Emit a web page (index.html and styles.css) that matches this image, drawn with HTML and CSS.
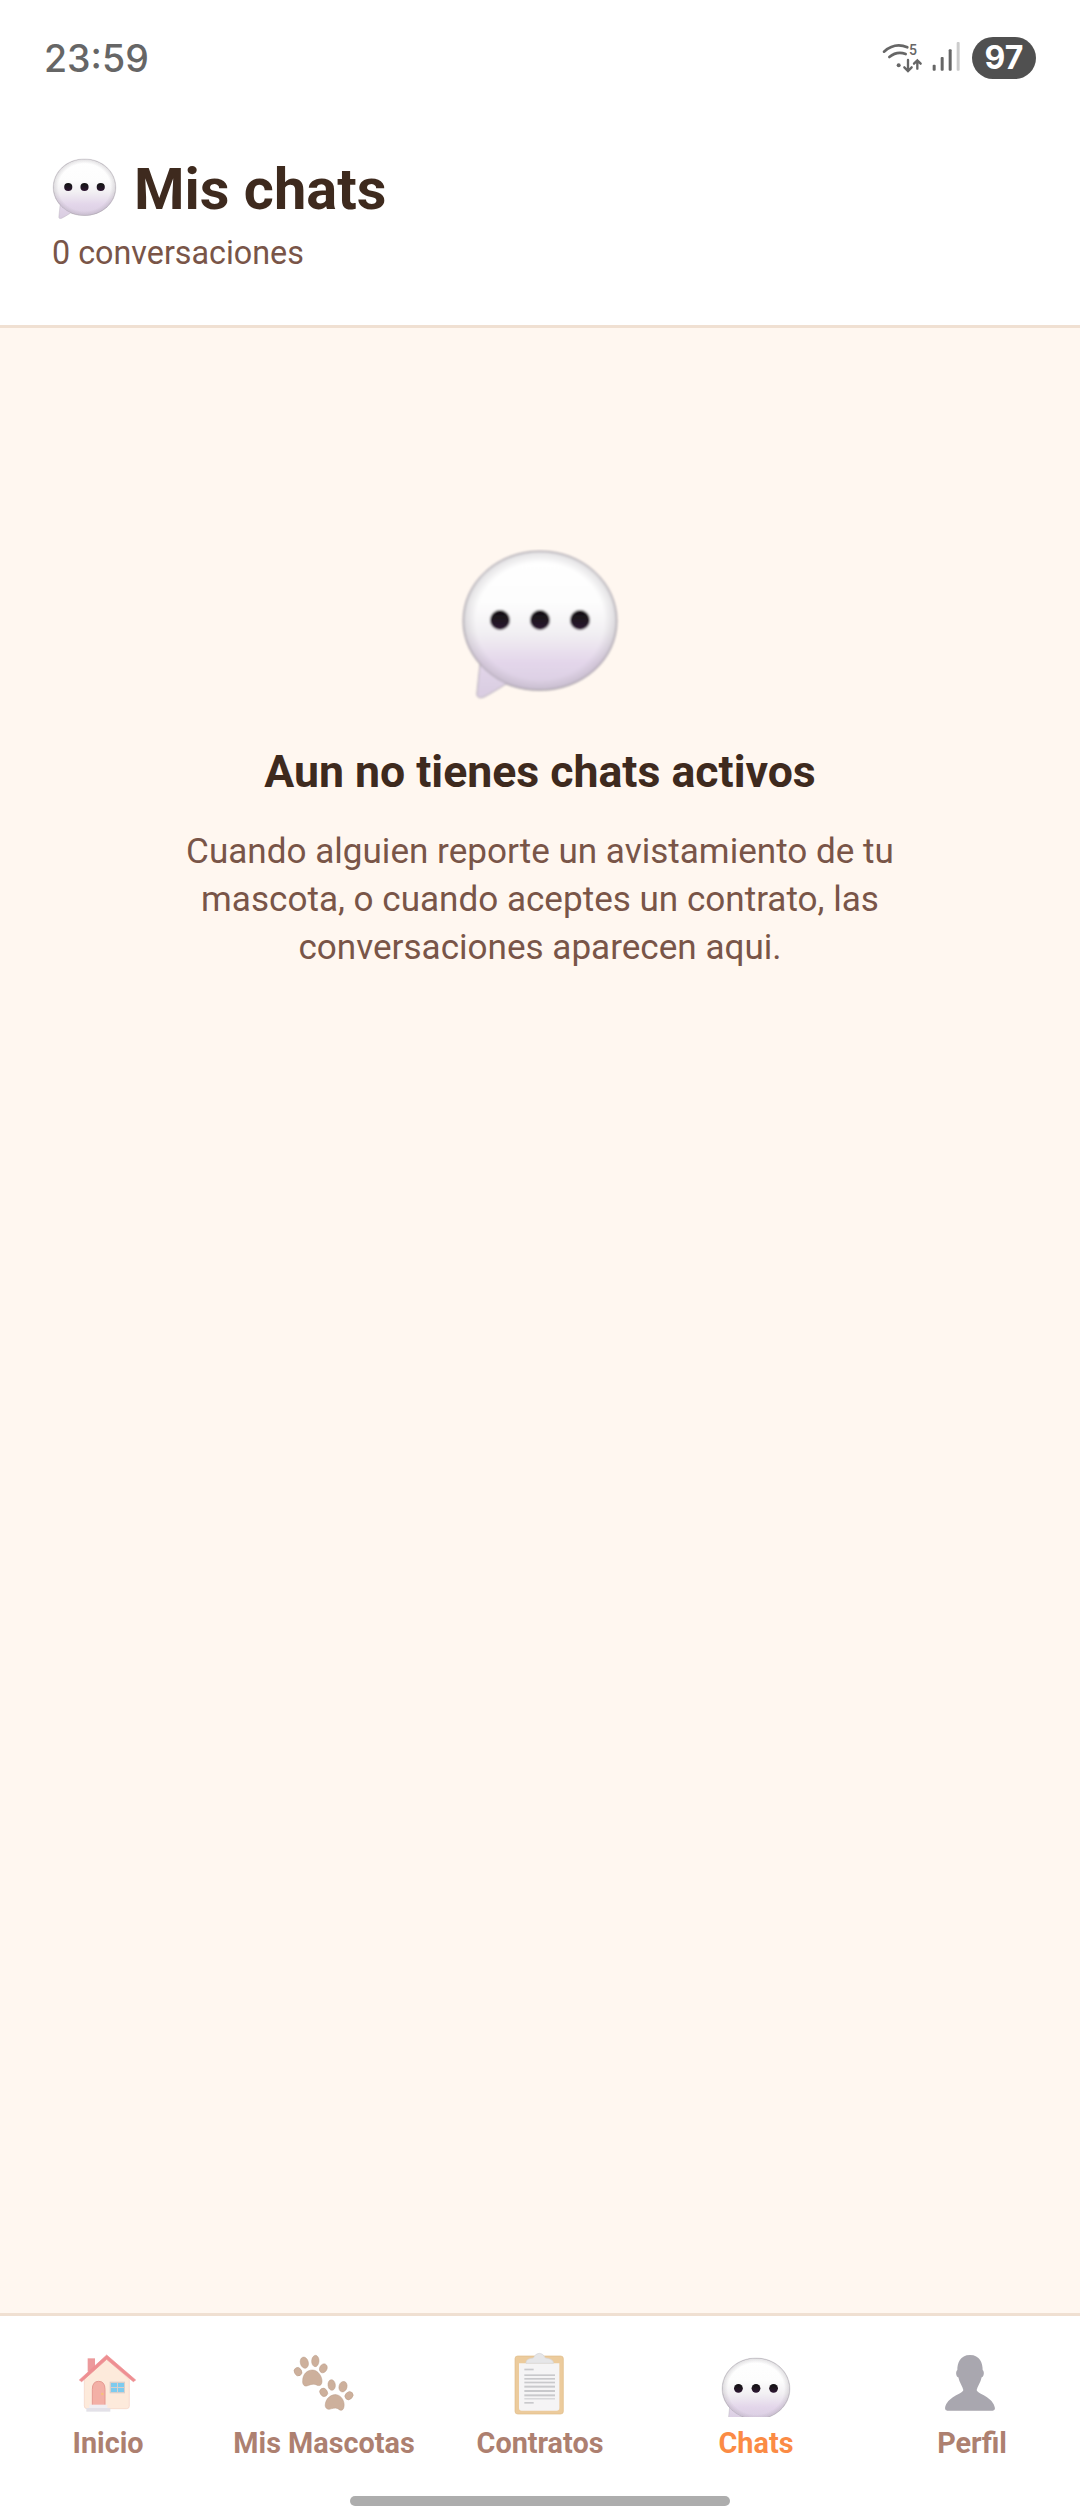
FILE: index.html
```html
<!DOCTYPE html>
<html lang="es">
<head>
<meta charset="utf-8">
<title>Mis chats</title>
<link rel="stylesheet" href="styles.css">
</head>
<body>
<div class="screen">
  <header class="top">
    <div class="status">
      <span class="time">23:59</span>
      <div class="status-right">
        <svg class="status-icons" viewBox="129 60 246 120">
          <g fill="none" stroke="#666" stroke-width="8" stroke-linecap="round">
            <path d="M135 101 Q168 72 205 88"/>
            <path d="M151 117 Q174 98 200 108"/>
            <path d="M207 126V158M196 148L207 159L218 148" stroke-width="7"/>
            <path d="M235 152V127M225 137L235 127L245 137" stroke-width="7"/>
          </g>
          <circle cx="179" cy="142" r="6" fill="#666"/>
          <text class="wifi-five" x="210" y="110">5</text>
          <g fill="#666">
            <rect x="281" y="140" width="9" height="18" rx="3"/>
            <rect x="305" y="117" width="9" height="41" rx="3"/>
            <rect x="329" y="94" width="9" height="64" rx="3"/>
            <rect x="353" y="72" width="9" height="86" rx="3" fill="#ccc"/>
          </g>
        </svg>
        <span class="battery">97</span>
      </div>
    </div>
    <div class="title-block">
      <h1 class="title">
        <svg class="title-emoji" viewBox="0 0 160 152">
          <defs>
            <linearGradient id="bubbleFill" x1="0" y1="0" x2="0" y2="1">
              <stop offset="0" stop-color="#fff"/>
              <stop offset="0.35" stop-color="#fdfdfd"/>
              <stop offset="0.55" stop-color="#f2f0f3"/>
              <stop offset="0.76" stop-color="#e3d6ea"/>
              <stop offset="1" stop-color="#d8cce0"/>
            </linearGradient>
            <radialGradient id="bubbleEdge" cx="80" cy="72" r="80" gradientUnits="userSpaceOnUse" gradientTransform="translate(0 6.5) scale(1 0.91)">
              <stop offset="0.8" stop-color="#8d8790" stop-opacity="0"/>
              <stop offset="0.93" stop-color="#8d8790" stop-opacity="0.22"/>
              <stop offset="0.97" stop-color="#8d8790" stop-opacity="0.6"/>
            </radialGradient>
            <linearGradient id="dotFill" x1="0" y1="0" x2="0" y2="1">
              <stop offset="0" stop-color="#111"/>
              <stop offset="1" stop-color="#2e1433"/>
            </linearGradient>
            <filter id="soft" x="-5%" y="-5%" width="110%" height="110%"><feGaussianBlur stdDeviation="1"/></filter>
            <clipPath id="tailCut"><rect x="-5" y="-5" width="170" height="141"/></clipPath>
            <symbol id="bubble" viewBox="0 0 160 152">
              <g filter="url(#soft)">
                <path d="M80 2C123 2 157 33 157 72C157 111 123 141 80 141C67 141 56 139 46 135C38 140 30 145 24 148C19 150 16 148 17 143C18 134 19 124 20 115C9 103 3 88 3 72C3 33 37 2 80 2Z" fill="url(#bubbleFill)" stroke="#b4aeb7" stroke-width="1"/>
                <ellipse cx="80" cy="72" rx="77" ry="70" fill="url(#bubbleEdge)"/>
                <circle cx="40" cy="71" r="10" fill="url(#dotFill)"/>
                <circle cx="80" cy="71" r="10" fill="url(#dotFill)"/>
                <circle cx="120" cy="71" r="10" fill="url(#dotFill)"/>
              </g>
            </symbol>
          </defs>
          <use href="#bubble" width="160" height="152"/>
        </svg>
        <span>Mis chats</span>
      </h1>
      <p class="subtitle">0 conversaciones</p>
    </div>
  </header>

  <main class="empty">
    <svg class="empty-emoji" viewBox="0 0 160 152"><use href="#bubble" width="160" height="152"/></svg>
    <h2 class="empty-title">Aun no tienes chats activos</h2>
    <p class="empty-text">Cuando alguien reporte un avistamiento de tu mascota, o cuando aceptes un contrato, las conversaciones aparecen aqui.</p>
  </main>

  <nav class="nav">
    <div class="tabs">
      <a class="tab">
        <svg class="tab-icon" viewBox="54 0 240 240">
          <rect x="113" y="55" width="22" height="40" fill="#ec9a9c"/>
          <path d="M103 118L170 58L238 118V198Q238 206 230 206H111Q103 206 103 198Z" fill="#fdeadb" stroke="#f4d2c2" stroke-width="2"/>
          <path d="M88 120L170 45L257 120L250 125L170 58L95 125Z" fill="#ee8f92" stroke="#ee8f92" stroke-width="2" stroke-linejoin="round"/>
          <path d="M127 197V148Q127 124 146 124Q165 124 165 148V197Z" fill="#f3b0a6" stroke="#e59a92" stroke-width="3"/>
          <circle cx="157" cy="162" r="4" fill="#f6c27a"/>
          <rect x="179" y="125" width="46" height="35" fill="#d8cfcb"/>
          <rect x="183" y="129" width="18" height="12" fill="#7ecbee"/>
          <rect x="204" y="129" width="18" height="12" fill="#7ecbee"/>
          <rect x="183" y="144" width="18" height="12" fill="#7ecbee"/>
          <rect x="204" y="144" width="18" height="12" fill="#7ecbee"/>
          <rect x="118" y="194" width="54" height="10" fill="#f0eef2"/>
          <rect x="109" y="204" width="72" height="11" fill="#e3e1e8"/>
        </svg>
        <span class="tab-label">Inicio</span>
      </a>
      <a class="tab">
        <svg class="tab-icon" viewBox="42 0 240 240">
          <g fill="#cdb09c" stroke="#bb9d89" stroke-width="1.5">
            <ellipse cx="103" cy="68" rx="12" ry="17" transform="rotate(-15 103 68)"/>
            <ellipse cx="136" cy="63" rx="11" ry="17" transform="rotate(3 136 63)"/>
            <ellipse cx="160" cy="85" rx="11" ry="14" transform="rotate(28 160 85)"/>
            <ellipse cx="84" cy="95" rx="11" ry="13" transform="rotate(-30 84 95)"/>
            <path d="M98 122C98 102 112 90 127 90C144 90 157 110 156 125C155 136 148 140 138 134C126 130 118 136 110 138C102 140 97 132 98 122Z"/>
            <ellipse cx="185" cy="135" rx="11" ry="16" transform="rotate(-6 185 135)"/>
            <ellipse cx="219" cy="140" rx="12" ry="16" transform="rotate(15 219 140)"/>
            <ellipse cx="237" cy="167" rx="11" ry="13" transform="rotate(45 237 167)"/>
            <ellipse cx="161" cy="157" rx="11" ry="13" transform="rotate(-35 161 157)"/>
            <path d="M166 192C168 175 184 162 199 164C214 166 225 184 222 200C220 212 212 214 204 206C194 202 186 206 178 208C170 208 164 202 166 192Z"/>
          </g>
        </svg>
        <span class="tab-label">Mis Mascotas</span>
      </a>
      <a class="tab">
        <svg class="tab-icon" viewBox="30 0 240 240">
          <rect x="75" y="48" width="145" height="174" rx="8" fill="#eccb9c" stroke="#e0bd8a" stroke-width="2"/>
          <path d="M87 70H208V204Q208 212 200 212H95Q87 212 87 204Z" fill="#f5f4f5"/>
          <path d="M108 66Q110 56 130 54Q136 40 148 40Q160 40 166 54Q186 56 190 66V70H108Z" fill="#e6e6e8" stroke="#d5d5d8" stroke-width="2"/>
          <g fill="#c9c9cc">
            <rect x="103" y="86" width="28" height="5"/>
            <rect x="103" y="103" width="92" height="5"/>
            <rect x="103" y="114" width="92" height="5"/>
            <rect x="103" y="125" width="92" height="5"/>
            <rect x="103" y="137" width="92" height="6"/>
            <rect x="103" y="150" width="92" height="6"/>
            <rect x="103" y="163" width="92" height="6"/>
            <rect x="103" y="175" width="92" height="3"/>
            <rect x="103" y="186" width="28" height="5"/>
          </g>
        </svg>
        <span class="tab-label">Contratos</span>
      </a>
      <a class="tab tab-active">
        <svg class="tab-icon" viewBox="-11 -39 182 182">
          <g clip-path="url(#tailCut)"><use href="#bubble" width="160" height="152"/></g>
        </svg>
        <span class="tab-label">Chats</span>
      </a>
      <a class="tab">
        <svg class="tab-icon" viewBox="36 0 240 240">
          <path d="M150 45C120 45 112 70 112 90C106 95 108 110 115 112C118 128 128 140 130 150C128 162 80 170 75 205Q75 212 82 212H218Q225 212 225 205C220 170 172 162 170 150C172 140 182 128 185 112C192 110 194 95 188 90C188 70 180 45 150 45Z" fill="#a9a7af"/>
        </svg>
        <span class="tab-label">Perfil</span>
      </a>
    </div>
    <div class="home-bar"></div>
  </nav>
</div>
</body>
</html>
```
FILE: styles.css
```css
* { box-sizing: border-box; }
html, body { margin: 0; padding: 0; }
body { font-family: Roboto, "Noto Sans", sans-serif; background: #fff; }
.screen { width: 1080px; height: 2520px; display: flex; flex-direction: column; background: #fff7f0; overflow: hidden; }

.top { background: #fff; border-bottom: 3px solid #f0e0d2; height: 328px; display: flex; flex-direction: column; }
.status { height: 116px; display: flex; justify-content: space-between; align-items: center; padding: 0 44px 0 44px; }
.time { font-family: Inter, sans-serif; font-size: 37.5px; font-weight: 500; color: #666; }
.status-right { display: flex; align-items: center; gap: 8px; }
.status-icons { width: 82px; height: 40px; display: block; }
.wifi-five { font-family: Roboto, sans-serif; font-size: 42px; font-weight: 500; fill: #666; }
.battery { width: 64px; height: 42px; border-radius: 21px; background: #505050; color: #fff; font-family: Inter, sans-serif; font-weight: 700; font-size: 32px; line-height: 42px; text-align: center; }

.title-block { padding: 40px 53px 0 52px; }
.title { margin: 0; display: flex; align-items: center; gap: 17px; font-size: 57.75px; line-height: 66px; font-weight: 700; color: #3e2a1e; }
.title-emoji { width: 65px; height: 62px; display: block; }
.subtitle { margin: 11px 0 0; font-size: 32.3px; line-height: 40px; color: #795548; }

.empty { flex: 1; display: flex; flex-direction: column; align-items: center; padding-top: 221px; }
.empty-emoji { width: 160px; height: 152px; display: block; }
.empty-title { margin: 46px 0 0; font-size: 44.6px; line-height: 50px; font-weight: 700; color: #3e2a1e; }
.empty-text { margin: 30px 0 0; width: 780px; font-size: 35.1px; line-height: 48px; color: #795548; text-align: center; }

.nav { height: 207px; background: #fff; border-top: 3px solid #f0e0d2; display: flex; flex-direction: column; }
.tabs { display: grid; grid-template-columns: repeat(5, 1fr); padding-top: 24px; }
.tab { display: flex; flex-direction: column; align-items: center; }
.tab-icon { width: 80px; height: 80px; display: block; }
.tab-label { margin-top: 5px; font-size: 28.8px; line-height: 36px; font-weight: 700; color: #ad8070; }
.tab-active .tab-label { color: #fb8b45; }
.home-bar { width: 380px; height: 10px; border-radius: 5px; background: #adadad; margin: 35px auto 0; }
```
